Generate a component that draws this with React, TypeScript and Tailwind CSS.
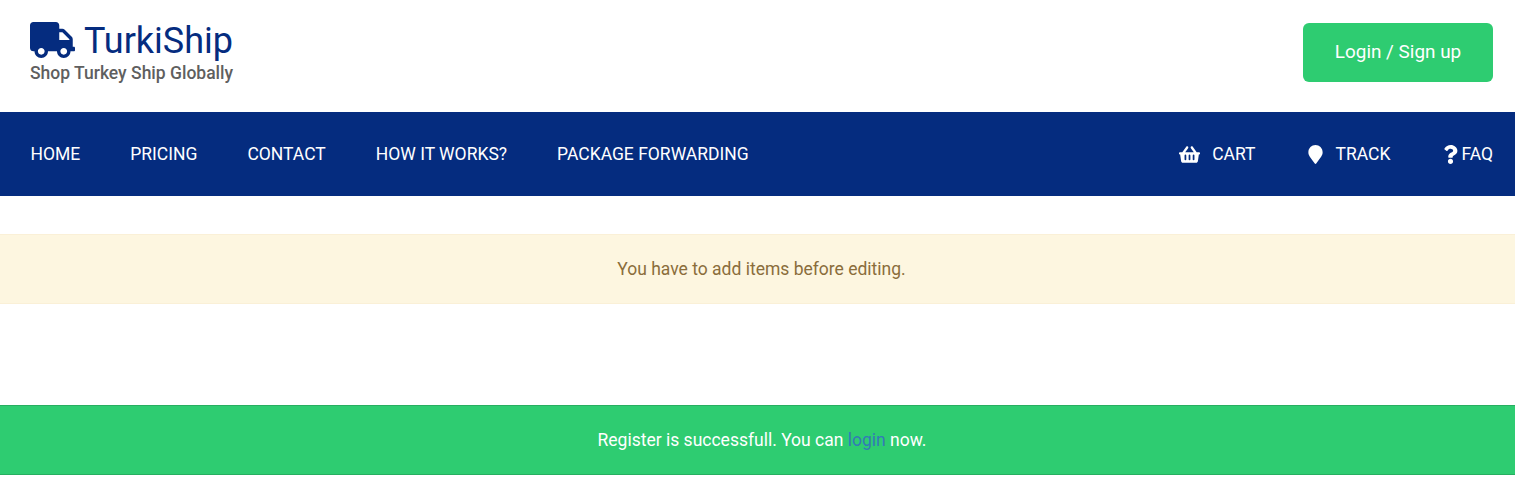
import { FaTruck, FaShoppingBasket, FaMapMarker, FaQuestion } from "react-icons/fa";

const left = ["HOME", "PRICING", "CONTACT", "HOW IT WORKS?", "PACKAGE FORWARDING"];

export default function App() {
  return (
    <div className="min-h-[504px] bg-white font-['Roboto',sans-serif] text-[17.5px]">
      <header className="flex h-[112px] items-start justify-between pl-[30px] pr-[22px] pt-[23px]">
        <div className="-mt-[1px] flex flex-col">
          <div className="flex h-[36px] items-center gap-[9px] text-[#052c7f]">
            <FaTruck className="h-[36px] w-[45px]" />
            <span className="mt-[2px] text-[36px] leading-[36px]">TurkiShip</span>
          </div>
          <span className="mt-[1px] font-medium text-[17.5px] leading-[28px] text-[#5f5f5f]">Shop Turkey Ship Globally</span>
        </div>
        <a className="flex h-[59px] w-[190px] items-center justify-center rounded-md bg-[#2ecc71] text-[18.9px] text-white">
          Login / Sign up
        </a>
      </header>
      <nav className="flex h-[84px] items-center justify-between bg-[#052c7f] pl-[30.5px] pr-[22px] text-white">
        <div className="flex items-center gap-[50px]">
          {left.map((t) => (
            <a key={t}>{t}</a>
          ))}
        </div>
        <div className="flex items-center gap-[53px]">
          <a className="flex items-center gap-[12px]">
            <FaShoppingBasket className="h-[19px] w-[21px]" />
            CART
          </a>
          <a className="flex items-center gap-[12px]">
            <FaMapMarker className="h-[19px] w-[15px]" />
            TRACK
          </a>
          <a className="flex items-center gap-[3px]">
            <FaQuestion className="h-[19px] w-[15px]" />
            FAQ
          </a>
        </div>
      </nav>
      <div className="mt-[38px] flex h-[70px] items-center justify-center border-y border-[#faf0d7] bg-[#fdf6e0] pl-[8px] text-[#8a6d3b]">
        You have to add items before editing.
      </div>
      <div className="mt-[101px] flex h-[70px] items-center justify-center border-y border-[#27ae60] bg-[#2ecc71] pl-[9px] text-white">
        <p>
          Register is successfull. You can <a className="text-[#337ab7]">login</a> now.
        </p>
      </div>
    </div>
  );
}
